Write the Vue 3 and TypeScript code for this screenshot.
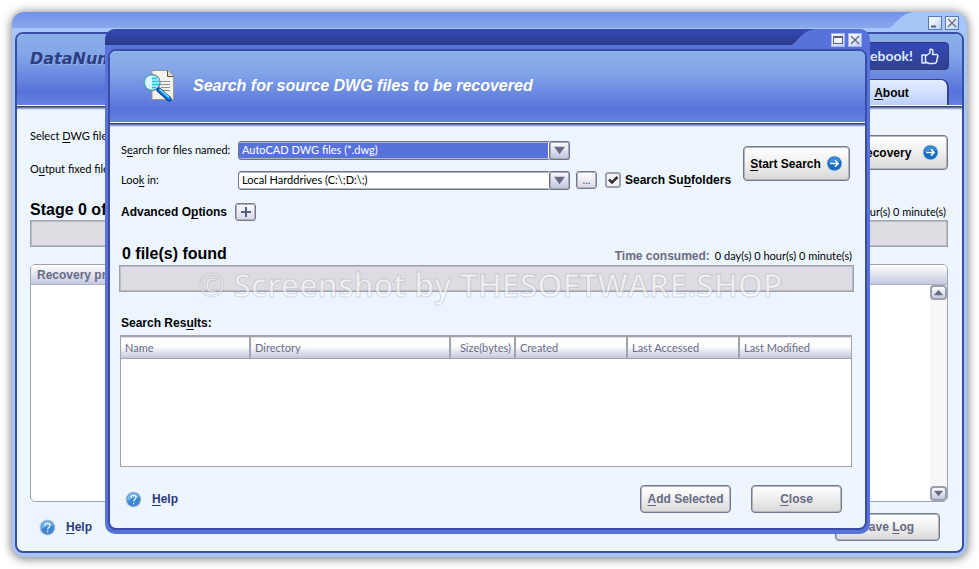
<script setup lang="ts">
import { ref } from 'vue'

interface Column {
  label: string
  width: string
  align?: string
}

const columns: Column[] = [
  { label: 'Name', width: '129px' },
  { label: 'Directory', width: '200px' },
  { label: 'Size(bytes)', width: '65px', align: 'right' },
  { label: 'Created', width: '112px' },
  { label: 'Last Accessed', width: '112px' },
  { label: 'Last Modified', width: 'auto' },
]

const fileMask = ref('dwg')
const location = ref('local')
const subfolders = ref(true)
const elapsed = '0 day(s) 0 hour(s) 0 minute(s)'
</script>

<template>
  <div class="desktop">
    <main class="window main-window">
      <div class="titlebar">
        <div class="title-fill"></div>
        <svg class="title-curve" viewBox="0 0 26 16" preserveAspectRatio="none" aria-hidden="true">
          <defs>
            <linearGradient id="lightTitle" x1="0" y1="0" x2="0" y2="1">
              <stop offset="0" stop-color="#7191ed" />
              <stop offset="1" stop-color="#88a8ec" />
            </linearGradient>
          </defs>
          <path d="M0 0H26C16 1 11 7 7 11Q3 16 0 16Z" fill="url(#lightTitle)" />
        </svg>
        <div class="title-buttons">
          <button class="caption" aria-label="Minimize">
            <svg viewBox="0 0 12 12"><path d="M2 9.500H7" stroke="#5a5f7c" stroke-width="2" /></svg>
          </button>
          <button class="caption" aria-label="Close window">
            <svg viewBox="0 0 12 12"><path d="M2 2L10 10M10 2L2 10" stroke="#666b80" stroke-width="1.300" /></svg>
          </button>
        </div>
      </div>

      <div class="frame">
        <header class="banner main-banner">
          <h1 class="brand">DataNumen DWG Recovery</h1>
          <div class="banner-side">
            <a class="social" href="#facebook">
              Like us on Facebook!
              <svg viewBox="0 0 18 17" aria-hidden="true">
                <path d="M1 7H4.500V15H1ZM4.500 8L9 5V1.500Q12 .5 12 4L11.500 6.500H16Q17.500 7.500 16.500 9L15.500 14Q15 15.500 13 15.500H8L4.500 14" fill="none" stroke="#e6edff" stroke-width="1.500" stroke-linejoin="round" />
              </svg>
            </a>
            <a class="tab" href="#about"><span><u>A</u>bout</span></a>
          </div>
        </header>
        <div class="ridge"></div>

        <div class="main-body">
          <div class="main-top">
            <div class="main-labels">
              <span>Select <u>D</u>WG file</span>
              <span>O<u>u</u>tput fixed file</span>
            </div>
            <button class="button primary recovery">
              <span>Start <u>R</u>ecovery</span>
              <svg class="arrow" viewBox="0 0 18 18" aria-hidden="true">
                <circle cx="9" cy="9" r="8.500" fill="#c3d6e6" />
                <circle cx="9" cy="9" r="7.500" fill="#176bc2" />
                <path d="M3 7Q5 2 10 2.500Q14 3 15 7Q9 5 3 9Z" fill="#58a3e3" opacity=".6" />
                <path d="M4.500 9H12.500M9.500 5.500L13 9L9.500 12.500" fill="none" stroke="#fff" stroke-width="1.500" />
              </svg>
            </button>
          </div>
          <div class="progress-head">
            <h2>Stage 0 of 4</h2>
            <span class="elapsed">{{ elapsed }}</span>
          </div>
          <div class="progress" role="progressbar" aria-label="Recovery stage" aria-valuenow="0"></div>
          <section class="log">
            <h3>Recovery progress</h3>
            <div class="log-body">
              <div class="scrollbar">
                <button aria-label="Scroll up"><svg viewBox="0 0 12 10"><path d="M1 8L6 2L11 8Z" fill="#696b85" /></svg></button>
                <button aria-label="Scroll down"><svg viewBox="0 0 12 10"><path d="M1 2H11L6 8Z" fill="#696b85" /></svg></button>
              </div>
            </div>
          </section>
          <footer class="main-footer">
            <a class="help" href="#help">
              <svg viewBox="0 0 18 18" aria-hidden="true">
                <circle cx="9" cy="9" r="8.500" fill="#c5cbd5" />
                <circle cx="9" cy="9" r="7.300" fill="#3c87cf" />
                <path d="M2.500 8Q3 2 9 2Q14 2 15 7Q8 6 2.500 11Z" fill="#72b5e7" />
                <path d="M6.300 7Q6.500 4.500 9 4.500Q11.700 4.500 11.700 6.800Q11.700 8 10.300 8.900Q9.200 9.600 9.200 11M9.200 12.500V14" fill="none" stroke="#fff" stroke-width="1.200" />
              </svg>
              <span><u>H</u>elp</span>
            </a>
            <button class="button muted save"><span>Save <u>L</u>og</span></button>
          </footer>
        </div>
      </div>
    </main>

    <section class="window dialog" role="dialog" aria-labelledby="dialog-title">
      <div class="titlebar">
        <div class="title-fill"></div>
        <svg class="title-curve" viewBox="0 0 26 16" preserveAspectRatio="none" aria-hidden="true">
          <defs>
            <linearGradient id="darkTitle" x1="0" y1="0" x2="0" y2="1">
              <stop offset="0" stop-color="#3449b9" />
              <stop offset="1" stop-color="#2b3a87" />
            </linearGradient>
          </defs>
          <path d="M0 0H26C16 1 11 7 7 11Q3 16 0 16Z" fill="url(#darkTitle)" />
        </svg>
        <div class="title-buttons">
          <button class="caption" aria-label="Maximize">
            <svg viewBox="0 0 12 12"><rect x="1.500" y="2.500" width="9" height="7" fill="#f3f5ff" stroke="#5a5f7c" /><path d="M1 3H11" stroke="#5a5f7c" stroke-width="2" /></svg>
          </button>
          <button class="caption" aria-label="Close dialog">
            <svg viewBox="0 0 12 12"><path d="M2 2L10 10M10 2L2 10" stroke="#666b80" stroke-width="1.300" /></svg>
          </button>
        </div>
      </div>

      <div class="frame">
        <header class="banner dialog-banner">
          <svg class="search-icon" viewBox="0 0 32 32" aria-hidden="true">
            <path d="M9 .500H25L30.500 6V29.500H9Z" fill="#f5f3e9" stroke="#9a978c" />
            <path d="M24.500 .500V6.500H30.500" fill="#dedbcd" stroke="#55534e" />
            <path d="M17 11.500H27M17 14.500H27M18 17.500H27M19 20.500H27" stroke="#8d8f9c" />
            <circle cx="9" cy="12.500" r="8" fill="#a7f5fb" stroke="#6390ae" stroke-width="1.300" />
            <path d="M5 7V18M7.500 6V19" stroke="#eaffff" stroke-width="2" />
            <path d="M9 8.500H14M9 11.500H16M9 14.500H16M9 17.500H13" stroke="#18c7da" stroke-width="1.500" />
            <path d="M16 20L26 29" stroke="#0a2e8c" stroke-width="5" stroke-linecap="round" />
            <path d="M16.500 20L26 28.500" stroke="#0a7cf0" stroke-width="3.500" stroke-linecap="round" />
            <path d="M17 19.500L25.500 27" stroke="#7de9ff" stroke-width="1.300" stroke-linecap="round" />
          </svg>
          <h2 id="dialog-title">Search for source DWG files to be recovered</h2>
        </header>
        <div class="ridge"></div>

        <div class="dialog-body">
          <div class="search-area">
            <form class="search-form" @submit.prevent>
              <div class="field-row">
                <label for="mask">S<u>e</u>arch for files named:</label>
                <div class="combo active">
                  <select id="mask" v-model="fileMask">
                    <option value="dwg">AutoCAD DWG files (*.dwg)</option>
                  </select>
                  <svg viewBox="0 0 12 8" aria-hidden="true"><path d="M0 0H12L6 8Z" fill="#696b85" /></svg>
                </div>
              </div>
              <div class="field-row">
                <label for="location">Loo<u>k</u> in:</label>
                <div class="combo">
                  <select id="location" v-model="location">
                    <option value="local">Local Harddrives (C:\;D:\;)</option>
                  </select>
                  <svg viewBox="0 0 12 8" aria-hidden="true"><path d="M0 0H12L6 8Z" fill="#696b85" /></svg>
                </div>
                <button type="button" class="small-button browse">...</button>
                <label class="check">
                  <span class="check-box">
                    <input v-model="subfolders" type="checkbox" />
                    <svg v-if="subfolders" viewBox="0 0 16 16" aria-hidden="true"><path d="M4 7.500L7 10.500L12.500 5" fill="none" stroke="#30333f" stroke-width="2.500" /></svg>
                  </span>
                  <span>Search Su<u>b</u>folders</span>
                </label>
              </div>
              <div class="advanced">
                <span>Advanced O<u>p</u>tions</span>
                <button type="button" class="small-button" aria-label="Expand advanced options">
                  <svg viewBox="0 0 12 12"><path d="M1 6H11M6 1V11" stroke="#555c88" stroke-width="2" /></svg>
                </button>
              </div>
            </form>
            <button class="button primary search">
              <span><u>S</u>tart Search</span>
              <svg class="arrow" viewBox="0 0 18 18" aria-hidden="true">
                <circle cx="9" cy="9" r="8.500" fill="#c3d6e6" />
                <circle cx="9" cy="9" r="7.500" fill="#176bc2" />
                <path d="M3 7Q5 2 10 2.500Q14 3 15 7Q9 5 3 9Z" fill="#58a3e3" opacity=".6" />
                <path d="M4.500 9H12.500M9.500 5.500L13 9L9.500 12.500" fill="none" stroke="#fff" stroke-width="1.500" />
              </svg>
            </button>
          </div>

          <div class="progress-head">
            <h2>0 file(s) found</h2>
            <span class="elapsed"><b>Time consumed:</b>{{ elapsed }}</span>
          </div>
          <div class="progress" role="progressbar" aria-label="Search progress" aria-valuenow="0"></div>

          <h3 class="results-label">Search Res<u>u</u>lts:</h3>
          <div class="results">
            <table>
              <colgroup>
                <col v-for="column in columns" :key="column.label" :style="{ width: column.width }" />
              </colgroup>
              <thead>
                <tr>
                  <th v-for="column in columns" :key="column.label" :class="column.align">{{ column.label }}</th>
                </tr>
              </thead>
            </table>
          </div>

          <footer class="dialog-footer">
            <a class="help" href="#search-help">
              <svg viewBox="0 0 18 18" aria-hidden="true">
                <circle cx="9" cy="9" r="8.500" fill="#c5cbd5" />
                <circle cx="9" cy="9" r="7.300" fill="#3c87cf" />
                <path d="M2.500 8Q3 2 9 2Q14 2 15 7Q8 6 2.500 11Z" fill="#72b5e7" />
                <path d="M6.300 7Q6.500 4.500 9 4.500Q11.700 4.500 11.700 6.800Q11.700 8 10.300 8.900Q9.200 9.600 9.200 11M9.200 12.500V14" fill="none" stroke="#fff" stroke-width="1.200" />
              </svg>
              <span><u>H</u>elp</span>
            </a>
            <div class="actions">
              <button class="button muted"><span><u>A</u>dd Selected</span></button>
              <button class="button muted"><span><u>C</u>lose</span></button>
            </div>
          </footer>
        </div>
      </div>
    </section>

    <div class="watermark">© Screenshot by THESOFTWARE.SHOP</div>
  </div>
</template>

<style>
body {
  margin: 0;
  background: #fff;
}
</style>

<style scoped>
* {
  box-sizing: border-box;
}

.desktop {
  position: relative;
  display: flex;
  min-height: 100vh;
  padding: 12px;
  overflow: hidden;
  color: #000;
  font: 11px/16px Lato, sans-serif;
}

h1,
h2,
h3 {
  margin: 0;
}

button {
  padding: 0;
  font: inherit;
}

u {
  text-underline-offset: 2px;
}

.window {
  display: flex;
  flex-direction: column;
  border-radius: 13px;
}

.main-window {
  flex: 1;
  background: #a6c6f8;
  box-shadow: 0 1px 10px 1px rgb(0 0 0 / 50%);
}

.dialog {
  position: absolute;
  inset: 29px 109px 35px 105px;
  border-radius: 10px;
  background: #5872db;
}

.titlebar {
  display: flex;
  height: 16px;
}

.title-fill {
  flex: 1;
  border-top-left-radius: 12px;
  background: linear-gradient(#7191ed, #88a8ec);
}

.dialog .title-fill {
  border-top-left-radius: 10px;
  background: linear-gradient(#3449b9, #2b3a87);
}

.title-curve {
  width: 26px;
  height: 16px;
}

.title-buttons {
  display: flex;
  gap: 3px;
  align-items: flex-start;
  padding: 4px 8px 0 14px;
}

.caption {
  width: 14px;
  height: 14px;
  border: 1px solid #5979bd;
  background: linear-gradient(135deg, #fff, #bdd0fb);
}

.dialog .title-buttons {
  padding-left: 15px;
}

.dialog .caption {
  border-color: #a7b6ef;
}

.caption svg {
  display: block;
  width: 12px;
  height: 12px;
}

.frame {
  display: flex;
  flex: 1;
  flex-direction: column;
  margin: 4px 3px;
  overflow: hidden;
  border: 2px solid #3a4da6;
  border-radius: 8px;
  background: #edf6ff;
}

.banner {
  display: flex;
  height: 71px;
  background: linear-gradient(#8ab0e9, #82a5e8 30%, #5872da 82%, #6483df);
}

.ridge {
  height: 5px;
  background: linear-gradient(#fff 1px, #394373 1px 2px, #6273a4 2px 3px, #9aaac9 3px 4px, #d5deee 4px);
}

.main-banner {
  justify-content: space-between;
  padding: 8px 13px 0;
}

.brand {
  padding-top: 6px;
  color: #2c3e80;
  font: italic 700 16px/22px "DejaVu Sans", sans-serif;
  text-shadow: 1px 1px #8fb4f0;
}

.banner-side {
  display: flex;
  flex-direction: column;
  justify-content: space-between;
  align-items: flex-end;
}

.social {
  display: flex;
  gap: 8px;
  align-items: center;
  height: 28px;
  padding: 0 9px;
  border: 1px solid #2c3a80;
  border-radius: 4px;
  background: linear-gradient(#3448b7, #30418f);
  color: #dce7ff;
  font: 700 14px/20px Lato, sans-serif;
  text-decoration: none;
}

.social svg {
  width: 18px;
  height: 17px;
}

.tab {
  display: flex;
  justify-content: center;
  align-items: center;
  width: 114px;
  height: 26px;
  border: 2px solid #32448e;
  border-width: 1px 2px 0 1px;
  border-radius: 2px 8px 0 0;
  background: linear-gradient(#e4eeff, #bcd0fb);
  color: #000;
  font: 700 12px/16px "Liberation Sans", sans-serif;
  text-decoration: none;
}

.main-body {
  display: flex;
  flex: 1;
  flex-direction: column;
  padding: 18px 14px 10px 13px;
}

.main-top {
  display: flex;
  justify-content: space-between;
}

.main-labels {
  display: flex;
  flex-direction: column;
  gap: 17px;
}

.button {
  display: flex;
  justify-content: center;
  align-items: center;
  width: 91px;
  height: 28px;
  border: 1px solid #74778f;
  border-radius: 4px;
  background: linear-gradient(#fff, #f0f0f0 48%, #d8d8d8);
  box-shadow: inset 0 0 0 1px #b4b5c0;
  font: 700 12px/16px "Liberation Sans", sans-serif;
}

.button.muted {
  color: #666982;
}

.button.primary {
  gap: 5px;
  width: 107px;
  height: 35px;
  color: #000;
}

.button.recovery {
  gap: 11px;
  width: 130px;
  margin-top: 7px;
}

.arrow {
  width: 17px;
  height: 17px;
}

.progress-head {
  display: flex;
  justify-content: space-between;
  align-items: flex-end;
  margin-top: 23px;
  padding: 0 2px 0 0;
}

.progress-head h2 {
  font: 700 16px/20px "Liberation Sans", sans-serif;
}

.elapsed b {
  margin-right: 5px;
  color: #696b80;
  font: 700 12px/16px "Liberation Sans", sans-serif;
}

.progress {
  height: 27px;
  border: 1px solid #a0a2a9;
  background: #dddce2;
  box-shadow: inset 0 0 0 1px #bcbdc3;
}

.log {
  display: flex;
  flex: 1;
  flex-direction: column;
  margin-top: 17px;
  border: 1px solid #a2a4ad;
  border-radius: 5px;
  background: #fff;
}

.log h3 {
  height: 20px;
  padding: 0 6px;
  border-bottom: 1px solid #aeb1c0;
  border-radius: 4px 4px 0 0;
  background: linear-gradient(#fff, #c4c9df);
  color: #696b85;
  font: 700 12px/20px "Liberation Sans", sans-serif;
}

.log-body {
  display: flex;
  flex: 1;
  justify-content: flex-end;
}

.scrollbar {
  display: flex;
  flex-direction: column;
  justify-content: space-between;
  width: 17px;
  background: #f6f6f6;
}

.scrollbar button {
  display: grid;
  place-items: center;
  width: 17px;
  height: 15px;
  border: 2px solid #9c9fad;
  border-radius: 4px;
  background: linear-gradient(#fff, #c1c8dc);
}

.scrollbar svg {
  width: 11px;
  height: 9px;
}

.main-footer,
.dialog-footer {
  display: flex;
  justify-content: space-between;
  align-items: center;
}

.main-footer {
  padding: 11px 8px 0 9px;
}

.button.save {
  width: 105px;
}

.help {
  display: flex;
  gap: 10px;
  align-items: center;
  color: #2b397d;
  font: 700 12px/16px "Liberation Sans", sans-serif;
  text-decoration: none;
}

.help svg {
  width: 17px;
  height: 17px;
}

.dialog-banner {
  gap: 18px;
  align-items: center;
  padding: 0 33px 2px;
}

.search-icon {
  width: 32px;
  height: 32px;
}

.dialog-banner h2 {
  color: #fff;
  font: italic 700 16px/20px "Liberation Sans", sans-serif;
}

.dialog-body {
  display: flex;
  flex: 1;
  flex-direction: column;
  padding: 14px 11px 15px 9px;
}

.search-area {
  display: flex;
  justify-content: space-between;
  padding: 0 4px 0 2px;
}

.search-form {
  display: flex;
  flex-direction: column;
  gap: 12px;
}

.field-row {
  display: flex;
  align-items: center;
  height: 18px;
}

.field-row > label:first-child {
  width: 117px;
  white-space: nowrap;
}

.combo {
  display: grid;
  width: 332px;
}

.combo select,
.combo svg {
  grid-area: 1 / 1;
}

.combo select {
  width: 100%;
  height: 19px;
  padding: 0 24px 0 3px;
  border: 1px solid #70728c;
  border-radius: 3px;
  appearance: none;
  background: #fff;
  box-shadow: inset 0 1px #b4b5c0, inset 0 -1px #b4b5c0;
  color: #000;
  font: inherit;
}

.combo.active select {
  background: #5872db;
  color: #fff;
}

.combo svg {
  justify-self: end;
  width: 21px;
  height: 19px;
  padding: 4px;
  border: 1px solid #70728c;
  border-radius: 3px;
  background: linear-gradient(#fff, #bbc1db);
  box-shadow: inset 0 0 0 1px #a9abbd, -1px 0 #fff;
  pointer-events: none;
}

.small-button {
  display: grid;
  place-items: center;
  width: 21px;
  height: 18px;
  border: 1px solid #777991;
  border-radius: 3px;
  background: linear-gradient(#fff, #d6d8e3);
  box-shadow: inset 0 0 0 1px #b0b2c0;
  color: #555870;
}

.small-button svg {
  width: 12px;
  height: 12px;
}

.browse {
  margin-left: 6px;
}

.check {
  display: flex;
  gap: 4px;
  align-items: center;
  margin-left: 8px;
  font: 700 12px/16px "Liberation Sans", sans-serif;
}

.check-box {
  display: grid;
}

.check-box input,
.check-box svg {
  grid-area: 1 / 1;
  width: 16px;
  height: 16px;
  margin: 0;
}

.check-box input {
  border: 2px solid #a1a2ac;
  border-radius: 3px;
  appearance: none;
  background: #f4f4f6;
}

.check-box svg {
  pointer-events: none;
}

.advanced {
  display: flex;
  gap: 8px;
  align-items: center;
  padding-top: 2px;
  font: 700 12px/16px "Liberation Sans", sans-serif;
}

.button.search {
  margin-top: 5px;
}

.dialog-body .progress-head {
  padding-left: 3px;
}

.dialog-body .progress {
  margin-top: 1px;
}

.results-label {
  margin: 23px 2px 4px;
  font: 700 12px/16px "Liberation Sans", sans-serif;
}

.results {
  flex: 1;
  margin: 0 2px 0 1px;
  border: 1px solid #a2a3ac;
  background: #fff;
}

table {
  width: 100%;
  border-collapse: collapse;
  table-layout: fixed;
}

th {
  height: 22px;
  padding: 0 4px;
  border-top: 1px solid #a2a3ac;
  border-right: 2px solid #a2a3ac;
  border-bottom: 1px solid #a2a3ac;
  background: linear-gradient(#fff, #fafbfd 45%, #c0c6dc);
  color: #696b85;
  font-weight: 400;
  text-align: left;
}

th:last-child {
  border-right: 0;
}

th.right {
  padding-right: 3px;
  text-align: right;
}

.dialog-footer {
  margin-top: 18px;
  padding: 0 12px 0 6px;
}

.actions {
  display: flex;
  gap: 20px;
}

.watermark {
  position: absolute;
  top: 265px;
  right: 0;
  left: 2px;
  color: rgb(255 255 255 / 55%);
  font: 600 32px/40px "Open Sans", sans-serif;
  text-align: center;
  pointer-events: none;
  -webkit-text-stroke: 1px rgb(120 125 140 / 28%);
}
</style>
